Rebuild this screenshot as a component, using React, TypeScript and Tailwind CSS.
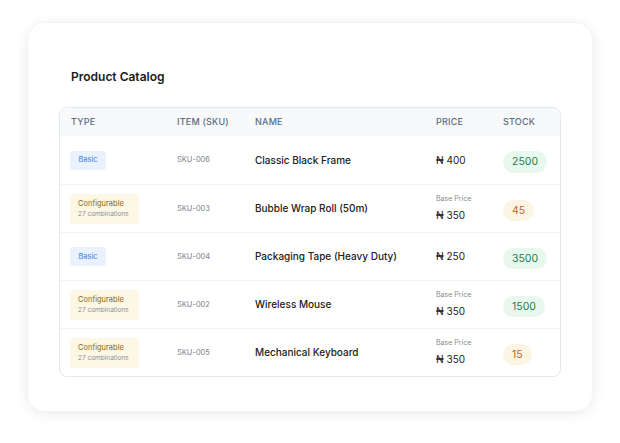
const rows = [
  { cfg: false, sku: "SKU-006", name: "Classic Black Frame", price: "400", stock: "2500", low: false },
  { cfg: true, sku: "SKU-003", name: "Bubble Wrap Roll (50m)", price: "350", stock: "45", low: true },
  { cfg: false, sku: "SKU-004", name: "Packaging Tape (Heavy Duty)", price: "250", stock: "3500", low: false },
  { cfg: true, sku: "SKU-002", name: "Wireless Mouse", price: "350", stock: "1500", low: false },
  { cfg: true, sku: "SKU-005", name: "Mechanical Keyboard", price: "350", stock: "15", low: true },
];

export default function App() {
  return (
    <div className="w-[620px] h-[443px] bg-white pt-[22px] pl-[27px]" style={{ fontFamily: "Inter, 'Noto Sans', sans-serif" }}>
      <div className="w-[566px] h-[390px] rounded-[18px] bg-white shadow-[0_2px_14px_rgba(0,0,0,0.08)] border border-gray-100 pt-[45px] px-[31px]">
        <div className="pl-[12px] text-[12px] font-semibold text-[#1a1a1a]">Product Catalog</div>
        <div className="mt-[21px] border border-[#e3e8f0] rounded-[8px] overflow-hidden">
          <div className="h-[28px] bg-[#f8f9fb] flex items-center text-[9px] font-medium text-[#5f6b7d] tracking-wide">
            <div className="w-[117px] pl-[11px]">TYPE</div>
            <div className="w-[78px]">ITEM (SKU)</div>
            <div className="w-[181px]">NAME</div>
            <div className="w-[67px]">PRICE</div>
            <div>STOCK</div>
          </div>
          {rows.map((r, i) => (
            <div key={i} className={`h-[48px] flex items-center ${i > 0 ? "border-t border-[#f1f3f6]" : ""}`}>
              <div className="w-[117px] pl-[10px]">
                {r.cfg ? (
                  <div className="w-[69px] h-[30px] rounded-[3px] bg-[#fdf8e6] pl-[8px] flex flex-col justify-center">
                    <div className="text-[7.5px] text-[#8a6412] leading-[11px]">Configurable</div>
                    <div className="text-[6.5px] text-[#8b8f96] leading-[10px]">27 combinations</div>
                  </div>
                ) : (
                  <div className="w-[36px] h-[19px] rounded-[3px] bg-[#eaf2fe] flex items-center justify-center text-[7.5px] text-[#3b7de0]">Basic</div>
                )}
              </div>
              <div className="w-[78px] text-[7.5px] text-[#7b818c]">{r.sku}</div>
              <div className="w-[181px] text-[10px] font-medium text-[#222]">{r.name}</div>
              <div className="w-[67px]">
                {r.cfg && <div className="text-[7px] text-[#858b95] mb-[3px]">Base Price</div>}
                <div className="text-[10px] text-[#222]">₦ {r.price}</div>
              </div>
              <div>
                <span className={`inline-block rounded-full px-[9px] py-[3px] text-[10.5px] ${r.low ? "bg-[#fdf5e3] text-[#c1651e]" : "bg-[#e9f8ef] text-[#1f7d4c]"}`}>{r.stock}</span>
              </div>
            </div>
          ))}
        </div>
      </div>
    </div>
  );
}
